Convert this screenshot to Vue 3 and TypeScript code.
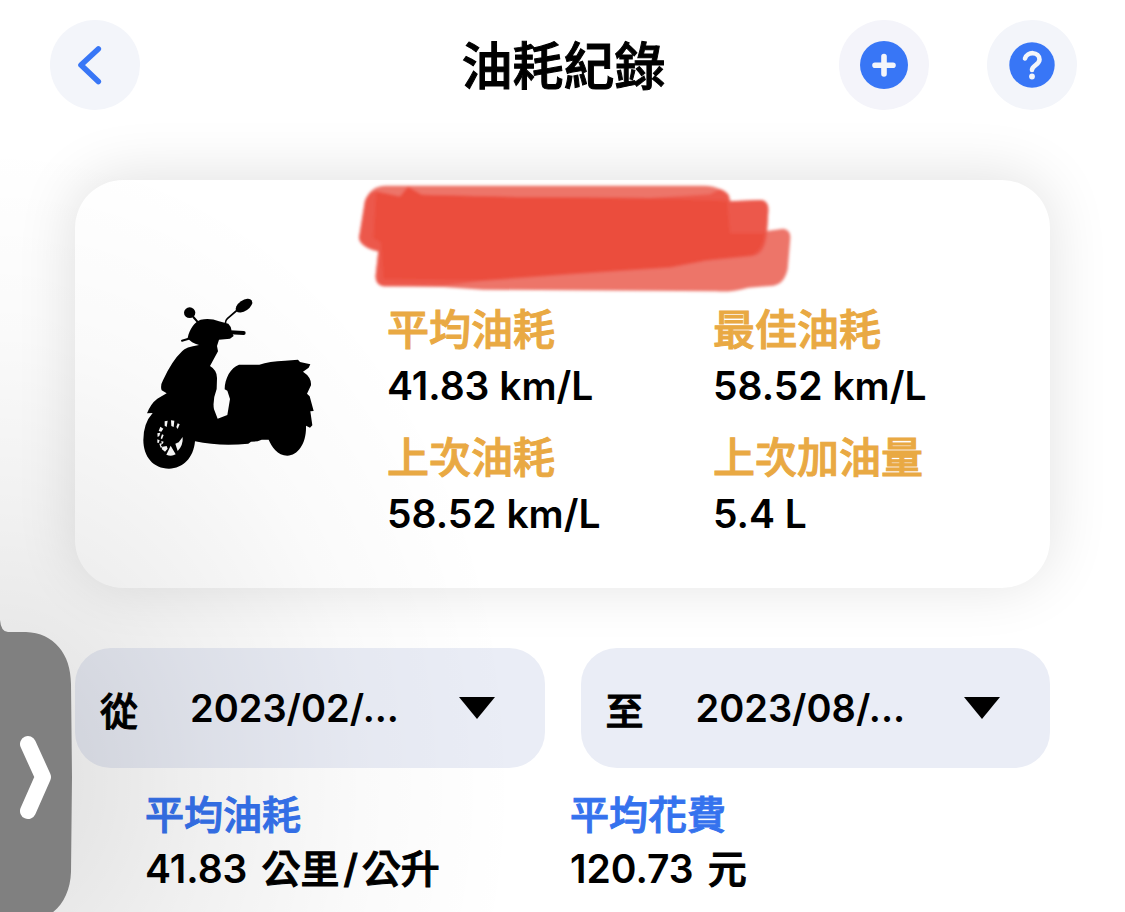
<script setup lang="ts">
import { ref } from 'vue'

interface Stat {
  label: string
  value: string
  units: string[]
}

const records: Stat[] = [
  { label: '平均油耗', value: '41.83', units: ['km/L'] },
  { label: '最佳油耗', value: '58.52', units: ['km/L'] },
  { label: '上次油耗', value: '58.52', units: ['km/L'] },
  { label: '上次加油量', value: '5.4', units: ['L'] },
]

const summary: Stat[] = [
  { label: '平均油耗', value: '41.83', units: ['公里', '/', '公升'] },
  { label: '平均花費', value: '120.73', units: ['元'] },
]

const from = ref('2023/02/...')
const to = ref('2023/08/...')
</script>

<template>
  <div class="page">
    <header class="bar">
      <button class="round" type="button" aria-label="返回">
        <svg viewBox="0 0 90 90"><path d="M48.300 29 31 45 48.300 61.500" fill="none" stroke="#3876f6" stroke-width="5.600" stroke-linecap="round" stroke-linejoin="round" /></svg>
      </button>
      <h1>油耗紀錄</h1>
      <div class="actions">
        <button class="round add" type="button" aria-label="新增">
          <svg viewBox="0 0 90 90">
            <circle cx="45" cy="45" r="24" fill="#3876f6" />
            <path d="M45 36.500v17.500M36 45.200h18" stroke="#f4f5fa" stroke-width="5.600" stroke-linecap="round" />
          </svg>
        </button>
        <button class="round" type="button" aria-label="說明">
          <svg viewBox="0 0 90 90">
            <circle cx="45" cy="45" r="22.700" fill="#3876f6" />
            <path d="M38 38.500C40 31 52.500 31.500 52.500 39.500C52.500 45 45 45 45 50" fill="none" stroke="#f3f5fa" stroke-width="4.600" stroke-linecap="round" />
            <circle cx="45" cy="56.500" r="2.900" fill="#f3f5fa" />
          </svg>
        </button>
      </div>
    </header>

    <main>
      <section class="card">
        <div class="vehicle">
          <svg class="scooter" viewBox="0 0 600 600" role="img" aria-label="機車">
            <g fill="none" stroke="#000" stroke-linecap="round">
              <path d="M190 96 204 112" stroke-width="6" />
              <path d="M322 75 292 101Q286 106 286 116" stroke-width="5" />
              <path d="M156 167 181 160" stroke-width="6" />
              <path d="M300 142 341 144" stroke-width="12" />
            </g>
            <ellipse cx="179" cy="83" rx="17" ry="16" />
            <ellipse cx="342" cy="62" rx="28" ry="16" transform="rotate(-34 342 62)" />
            <path d="M173 159C179 130 194 111 212 104Q241 98 267 109L295 116Q306 127 304 139L311 153 300 161 267 164 261 183 264 199 240 243Q262 256 261 281L260 312Q247 346 252 373L263 401 292 390 300 342 292 317 284 313C284 281 302 247 327 239L388 239Q417 229 465 227L504 224 510 231 541 238 536 248 519 260Q545 277 543 301L531 326 539 334 551 378 541 379 547 421 540 428 528 422C530 475 504 512 472 512C443 512 424 484 416 464L395 464 383 469 363 470 355 476Q270 485 195 469C191 518 159 551 117 551C70 551 40 515 40 465Q40 415 68 384L51 385Q62 356 82 341L110 325 95 316Q90 302 99 286Q125 228 157 198Q166 186 207 180Q183 174 173 159Z" />
            <g fill="#fcfcfc">
              <path d="M104 409 113 407 110 426 104 422ZM123 406 133 407 131 426 124 423ZM143 415 149 418 143 432 139 426ZM91 425 100 431 94 440 86 438ZM82 445 91 443 88 453 83 456ZM82 463 89 466 86 474 82 473ZM88 476 96 474 93 482 99 487 92 488ZM98 485 110 483 113 491 105 500 95 492ZM96 448 101 450 96 463 92 460ZM94 468 101 470 98 477 95 475Z" />
              <path d="M122 482 109 509Q124 516 137 508ZM136 476 143 498Q160 481 158 456L146 472Z" />
            </g>
          </svg>
        </div>
        <div class="details">
          <svg class="marker" viewBox="0 0 1350 363" role="img" aria-label="車牌已遮蓋">
            <defs><filter id="soft" x="-5%" y="-10%" width="110%" height="120%"><feGaussianBlur stdDeviation="5" /></filter></defs>
            <g filter="url(#soft)">
              <path fill="#ed7469" d="M45 62Q62 17 108 17H1060Q1125 17 1140 64L1232 60Q1256 62 1255 91L1251 153 1300 146Q1322 149 1321 174L1313 268Q1302 313 1270 317L1195 323Q1140 338 1100 334L400 329 280 321 100 319Q75 313 77 286L85 214Q30 201 27 173Z" />
              <path fill="#ec584b" d="M45 62Q62 26 91 36L150 49 174 20 215 44 500 51 900 54 1080 43 1110 27Q1140 36 1140 64L1232 60Q1256 62 1255 91L1250 170Q1243 224 1205 229L1070 242 960 263 650 284 390 304 280 317 100 319Q75 313 77 286L85 214Q30 201 27 173Z" />
              <path fill="#eb4e3c" d="M78 36 150 50 174 20 215 44 500 51 900 54 1132 62 1140 160 1245 160Q1236 214 1205 226L1070 240 960 261 650 281 390 301 100 298 93 188 70 174Z" />
            </g>
          </svg>
          <dl class="records">
            <div v-for="item in records" :key="item.label">
              <dt>{{ item.label }}</dt>
              <dd>{{ item.value }} {{ item.units[0] }}</dd>
            </div>
          </dl>
        </div>
      </section>

      <form class="filters">
        <div class="pill">
          <label for="from">從</label>
          <select id="from" v-model="from"><option>2023/02/...</option></select>
          <svg viewBox="0 0 36 22" aria-hidden="true"><path d="M0 0H36L18 22Z" /></svg>
        </div>
        <div class="pill">
          <label for="to">至</label>
          <select id="to" v-model="to"><option>2023/08/...</option></select>
          <svg viewBox="0 0 36 22" aria-hidden="true"><path d="M0 0H36L18 22Z" /></svg>
        </div>
      </form>

      <dl class="summary">
        <div v-for="item in summary" :key="item.label">
          <dt>{{ item.label }}</dt>
          <dd>
            <span>{{ item.value }}</span>
            <span class="units"><span v-for="unit in item.units" :key="unit">{{ unit }}</span></span>
          </dd>
        </div>
      </dl>
    </main>

    <div class="shade"></div>
    <button class="handle" type="button" aria-label="展開側邊面板">
      <svg viewBox="0 0 72 302">
        <path fill="#808080" d="M0 0Q1 12 8 12H26C54 13 71 34 71 64L72 157 71 252C70 280 54 300 26 302H0Z" />
        <path d="M28 124 43 157 28 191" fill="none" stroke="#fff" stroke-width="16" stroke-linecap="round" stroke-linejoin="round" />
      </svg>
    </button>
  </div>
</template>

<style>
body {
  margin: 0;
}
</style>

<style scoped>
.page {
  position: relative;
  box-sizing: border-box;
  min-height: 100vh;
  overflow: hidden;
  background: #fff;
  color: #000;
  font-family: Inter, "Noto Sans CJK TC", sans-serif;
  font-weight: 600;
  font-size: 39px;
}
button {
  padding: 0;
  border: 0;
  cursor: pointer;
}
svg {
  display: block;
}
.bar {
  display: grid;
  grid-template-columns: 1fr auto 1fr;
  align-items: center;
  padding: 20px 48px 0 50px;
}
h1 {
  margin: 0;
  padding-top: 4px;
  font-size: 51px;
  line-height: 86px;
  font-weight: 500;
  -webkit-text-stroke: 1px currentColor;
}
.actions {
  display: flex;
  justify-content: flex-end;
  gap: 58px;
}
.round {
  width: 90px;
  height: 90px;
  border-radius: 50%;
  background: #f3f5fa;
}
.add {
  background: #f4f4fa;
}
main {
  padding: 70px 75px 0;
}
.card {
  display: grid;
  grid-template-columns: 312fr 663fr;
  padding-bottom: 47px;
  border-radius: 48px;
  background: #fff;
  box-shadow: 0 -4px 60px rgba(0, 0, 0, 0.12);
}
.vehicle {
  display: flex;
  align-items: center;
  padding: 48px 0 0 55px;
}
.scooter {
  width: 200px;
  height: 200px;
}
.marker {
  width: 450px;
  height: 121px;
  margin-left: -37px;
}
dl,
dd {
  margin: 0;
}
.records {
  display: grid;
  grid-template-columns: 326fr 337fr;
  row-gap: 16px;
}
.records dt {
  color: #e9a943;
  font-size: 42px;
  line-height: 58px;
  font-weight: 500;
  -webkit-text-stroke: 1px currentColor;
}
.records dd {
  line-height: 54px;
}
.filters {
  display: grid;
  grid-template-columns: 1fr 1fr;
  gap: 36px;
  margin-top: 60px;
  font-size: 38px;
}
.pill {
  display: grid;
  grid-template-columns: 90px 1fr 36px;
  align-items: center;
  height: 120px;
  box-sizing: border-box;
  padding: 0 50px 0 25px;
  border-radius: 36px;
  background: #eaedf6;
}
.pill label {
  font-weight: 500;
  -webkit-text-stroke: 1px currentColor;
}
.pill select {
  grid-column: 2 / 4;
  grid-row: 1;
  width: 100%;
  height: 120px;
  padding: 0;
  border: 0;
  appearance: none;
  background: transparent;
  color: #000;
  font: inherit;
}
.pill svg {
  grid-column: 3;
  grid-row: 1;
  width: 36px;
  height: 22px;
  pointer-events: none;
}
.summary {
  display: grid;
  grid-template-columns: 425fr 480fr;
  margin-top: 20px;
  padding-left: 70px;
  line-height: 54px;
}
.summary dt {
  color: #3572ee;
  font-weight: 500;
  -webkit-text-stroke: 1px currentColor;
}
.summary dd {
  display: flex;
  gap: 14px;
}
.units {
  display: flex;
  gap: 4px;
  font-weight: 500;
  -webkit-text-stroke: 1px currentColor;
}
.shade {
  position: absolute;
  inset: 0;
  pointer-events: none;
  background: radial-gradient(520px 640px at 0 780px, rgba(0, 0, 0, 0.12), rgba(0, 0, 0, 0.1) 15%, rgba(0, 0, 0, 0.06) 40%, rgba(0, 0, 0, 0.02) 70%, transparent);
}
.handle {
  position: absolute;
  left: 0;
  top: 620px;
  width: 72px;
  height: 302px;
  background: transparent;
}
.handle svg {
  width: 72px;
  height: 302px;
}
</style>
